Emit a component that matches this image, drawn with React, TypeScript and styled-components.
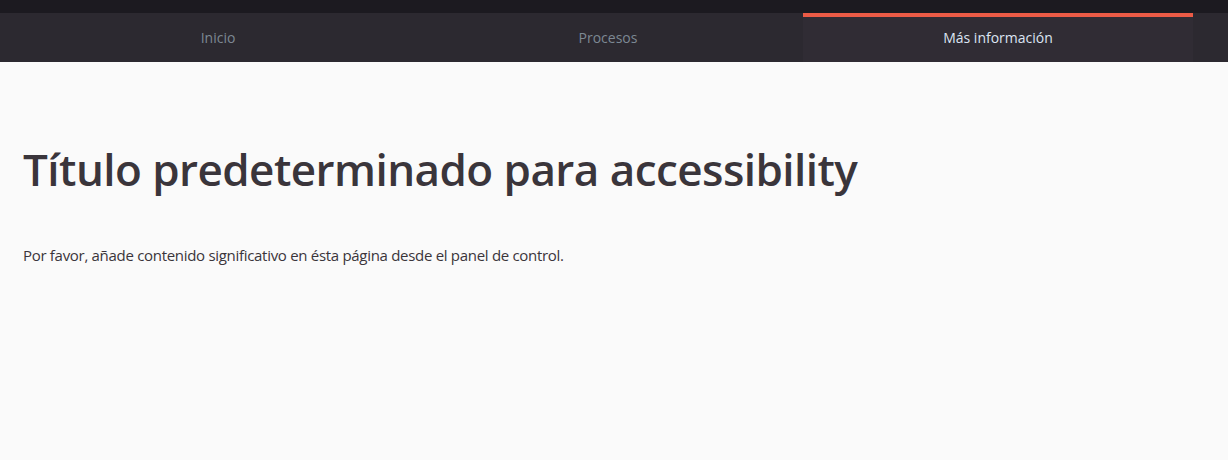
import React from "react";
import styled, { createGlobalStyle } from "styled-components";

const GlobalStyle = createGlobalStyle`
  html, body {
    margin: 0;
    padding: 0;
    background: #fafafa;
    font-family: "Open Sans", "Noto Sans", sans-serif;
  }
`;

const TopStrip = styled.div`
  height: 13px;
  background: #1c1a20;
`;

const NavBar = styled.nav`
  display: flex;
  height: 49px;
  background: #2c2930;
  padding: 0 35px 0 23px;
`;

const Tab = styled.a<{ $active?: boolean }>`
  flex: 1;
  display: flex;
  align-items: center;
  justify-content: center;
  box-sizing: border-box;
  border-top: 4px solid ${({ $active }) => ($active ? "#ec5b46" : "transparent")};
  background: ${({ $active }) => ($active ? "#302c34" : "transparent")};
  color: ${({ $active }) => ($active ? "#dce4f2" : "#7d8893")};
  font-size: 14px;
  padding-bottom: 4px;
  text-decoration: none;
  cursor: pointer;
`;

const Main = styled.main`
  padding: 80px 23px 0;
  color: #3a353b;
`;

const Title = styled.h1`
  margin: 0;
  font-size: 44px;
  font-weight: 600;
  line-height: 54px;
  letter-spacing: -0.55px;
`;

const Text = styled.p`
  margin: 48px 0 0;
  font-size: 15px;
  line-height: 22px;
  letter-spacing: -0.3px;
`;

export default function App() {
  const tabs = ["Inicio", "Procesos", "Más información"];
  return (
    <>
      <GlobalStyle />
      <TopStrip />
      <NavBar>
        {tabs.map((t, i) => (
          <Tab key={t} $active={i === 2}>
            {t}
          </Tab>
        ))}
      </NavBar>
      <Main>
        <Title>Título predeterminado para accessibility</Title>
        <Text>
          Por favor, añade contenido significativo en ésta página desde el panel de control.
        </Text>
      </Main>
    </>
  );
}
